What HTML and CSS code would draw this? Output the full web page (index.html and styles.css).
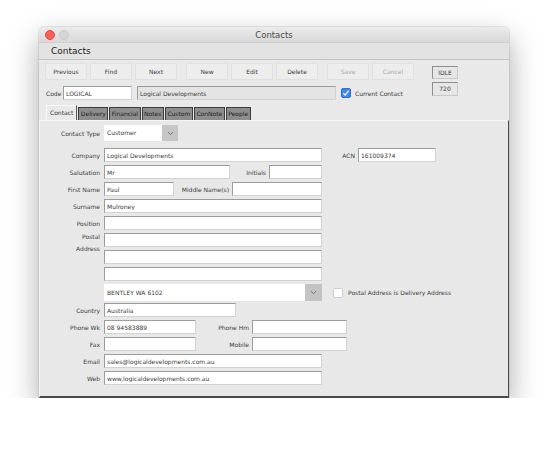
FILE: index.html
```html
<!DOCTYPE html>
<html lang="en">
<head>
    <meta charset="UTF-8">
    <title>Contacts</title>
    <link rel="stylesheet" href="styles.css">
</head>
<body>
    <div class="window">
        <div class="titlebar">
            <span class="dot close"></span>
            <span class="dot"></span>
            <div class="title">Contacts</div>
        </div>
        <div class="header">Contacts</div>

        <div class="toolbar">
            <div class="toolbar-main">
                <div class="buttons">
                    <div class="group">
                        <button>Previous</button>
                        <button>Find</button>
                        <button>Next</button>
                    </div>
                    <div class="group">
                        <button>New</button>
                        <button>Edit</button>
                        <button>Delete</button>
                    </div>
                    <div class="group">
                        <button class="disabled">Save</button>
                        <button class="disabled">Cancel</button>
                    </div>
                </div>
                <div class="code-row">
                    <label class="code-label">Code</label>
                    <input type="text" class="code-input" value="LOGICAL">
                    <input type="text" class="name-input" value="Logical Developments" readonly>
                    <span class="check checked">
                        <svg width="8" height="8" viewBox="0 0 8 8"><path d="M1.3 4.2 L3.2 6.1 L6.8 1.6" fill="none" stroke="#fff" stroke-width="1.3"/></svg>
                    </span>
                    <span class="check-label">Current Contact</span>
                </div>
            </div>
            <div class="status">
                <div class="status-box">IDLE</div>
                <div class="status-box tall">720</div>
            </div>
        </div>

        <div class="tabs">
            <div class="tab active">Contact</div>
            <div class="tab">Delivery</div>
            <div class="tab">Financial</div>
            <div class="tab">Notes</div>
            <div class="tab">Custom</div>
            <div class="tab">ConNote</div>
            <div class="tab">People</div>
        </div>

        <div class="panel">
            <div class="row type-row">
                <label>Contact Type</label>
                <div class="select w-type">
                    <span class="select-value">Customer</span>
                    <span class="select-arrow">
                        <svg width="7" height="5" viewBox="0 0 7 5"><path d="M1 1.2 L3.5 3.6 L6 1.2" fill="none" stroke="#666" stroke-width="0.9"/></svg>
                    </span>
                </div>
            </div>

            <div class="row company-row">
                <label>Company</label>
                <input type="text" class="w-full" value="Logical Developments">
                <label class="side w-acn">ACN</label>
                <input type="text" class="w-acn-input" value="161009374">
            </div>
            <div class="row">
                <label>Salutation</label>
                <input type="text" class="w-salutation" value="Mr">
                <label class="side w-initials">Initials</label>
                <input type="text" class="w-initials-input">
            </div>
            <div class="row">
                <label>First Name</label>
                <input type="text" class="w-first" value="Paul">
                <label class="side w-middle">Middle Name(s)</label>
                <input type="text" class="w-middle-input">
            </div>
            <div class="row">
                <label>Surname</label>
                <input type="text" class="w-full" value="Mulroney">
            </div>
            <div class="row">
                <label>Position</label>
                <input type="text" class="w-full">
            </div>
            <div class="row">
                <label class="postal">Postal<br>Address</label>
                <input type="text" class="w-full">
            </div>
            <div class="row">
                <label></label>
                <input type="text" class="w-full">
            </div>
            <div class="row">
                <label></label>
                <input type="text" class="w-full">
            </div>
            <div class="row combo-row">
                <label></label>
                <div class="select combo w-full">
                    <span class="select-value">BENTLEY WA 6102</span>
                    <span class="select-arrow">
                        <svg width="7" height="5" viewBox="0 0 7 5"><path d="M1 1.2 L3.5 3.6 L6 1.2" fill="none" stroke="#666" stroke-width="0.9"/></svg>
                    </span>
                </div>
                <span class="check plain"></span>
                <span class="check-label">Postal Address is Delivery Address</span>
            </div>
            <div class="row country-row">
                <label>Country</label>
                <input type="text" class="w-country" value="Australia">
            </div>
            <div class="row">
                <label>Phone Wk</label>
                <input type="text" class="w-phone" value="08 94583889">
                <label class="side w-phone-label">Phone Hm</label>
                <input type="text" class="w-phone-hm">
            </div>
            <div class="row">
                <label>Fax</label>
                <input type="text" class="w-phone">
                <label class="side w-phone-label">Mobile</label>
                <input type="text" class="w-phone-hm">
            </div>
            <div class="row">
                <label>Email</label>
                <input type="text" class="w-full" value="sales@logicaldevelopments.com.au">
            </div>
            <div class="row">
                <label>Web</label>
                <input type="text" class="w-full" value="www.logicaldevelopments.com.au">
            </div>
        </div>
    </div>
</body>
</html>
```

FILE: styles.css
```css
* {
    box-sizing: border-box;
    margin: 0;
    padding: 0;
}

body {
    background: #ffffff;
    font-family: 'DejaVu Sans', 'Liberation Sans', sans-serif;
    font-size: 6px;
    color: #3a3a3a;
}

.window {
    width: 470px;
    height: 371px;
    margin: 27px 0 0 39px;
    background: #e9e9e9;
    border-radius: 5px 5px 0 0;
    box-shadow: 0 12px 30px rgba(0, 0, 0, 0.34), 0 0 0 1px rgba(0, 0, 0, 0.08);
    display: flex;
    flex-direction: column;
}

.titlebar {
    height: 16px;
    display: flex;
    align-items: center;
    padding-left: 6px;
    gap: 4px;
    background: linear-gradient(#ebebeb, #d9d9d9);
    border-radius: 5px 5px 0 0;
    border-bottom: 1px solid #cfcfcf;
    position: relative;
}

.dot {
    width: 10px;
    height: 10px;
    border-radius: 50%;
    background: #d6d6d6;
    border: 1px solid #c8c8c8;
}

.dot.close {
    background: #fb5f57;
    border-color: #e2463f;
}

.title {
    position: absolute;
    left: 0;
    right: 0;
    text-align: center;
    font-size: 8.5px;
    color: #4a4a4a;
    pointer-events: none;
}

.header {
    height: 17px;
    line-height: 16px;
    padding-left: 12px;
    font-size: 9px;
    color: #222;
    background: #e3e3e3;
    border-bottom: 1px solid #c4c4c4;
}

.toolbar {
    display: flex;
    padding: 3px 0 0 6px;
    height: 45px;
}

.toolbar-main {
    width: 387px;
}

.buttons {
    display: flex;
    gap: 9px;
}

.group {
    display: flex;
    gap: 3px;
}

button {
    width: 42px;
    height: 17px;
    font-family: inherit;
    font-size: 6px;
    color: #3a3a3a;
    background: #ededed;
    border: 1px solid #e0e0e0;
    border-radius: 1px;
}

button.disabled {
    color: #a8a8a8;
}

.code-row {
    display: flex;
    align-items: center;
    margin-top: 6px;
    height: 14px;
}

.code-label {
    width: 18px;
    padding-left: 1px;
}

input {
    height: 14px;
    padding: 0 2px;
    font-family: inherit;
    font-size: 6px;
    color: #3a3a3a;
    background: #ffffff;
    border: 1px solid;
    border-color: #9c9c9c #d2d2d2 #d2d2d2 #9c9c9c;
    outline: none;
}

.code-input {
    width: 69px;
}

.name-input {
    width: 199px;
    margin-left: 5px;
    background: #e4e4e4;
}

.check {
    width: 10px;
    height: 10px;
    border-radius: 2px;
    display: flex;
    align-items: center;
    justify-content: center;
    flex-shrink: 0;
}

.check.checked {
    margin: 0 4px 0 5px;
    background: #3b86f7;
    border: 1px solid #2f6fd0;
}

.check.plain {
    margin: 0 5px 0 11px;
    background: #ffffff;
    border: 1px solid #cfcfcf;
}

.check-label {
    white-space: nowrap;
}

.status {
    display: flex;
    flex-direction: column;
    gap: 3px;
    padding-top: 3px;
}

.status-box {
    width: 26px;
    height: 13px;
    line-height: 11px;
    text-align: center;
    border: 1px solid;
    border-color: #8e8e8e #c9c9c9 #c9c9c9 #8e8e8e;
    background: #e6e6e6;
}

.status-box.tall {
    height: 14px;
}

.tabs {
    display: flex;
    padding-left: 7px;
    height: 15px;
    align-items: flex-end;
}

.tab {
    height: 13px;
    line-height: 12px;
    padding: 0 1.5px;
    background: #8d8d8d;
    color: #1e1e1e;
    border: 1px solid #3c3c3c;
    border-bottom: none;
    margin-right: 1px;
}

.tab.active {
    height: 15px;
    line-height: 13px;
    padding: 0 3px;
    background: #e9e9e9;
    border-color: #f8f8f8 #555 transparent #f8f8f8;
    color: #333;
}

.panel {
    flex: 1;
    padding: 4px 0 0 4px;
    border-top: 1px solid #f5f5f5;
    border-left: 1px solid #f5f5f5;
    border-right: 1px solid #4a4a4a;
    border-bottom: 2px solid #4a4a4a;
    background: #e8e8e8;
}

.row {
    display: flex;
    align-items: center;
    height: 14px;
    margin-top: 3px;
}

.row label {
    width: 60px;
    padding-right: 4px;
    text-align: right;
    flex-shrink: 0;
    white-space: nowrap;
}

.row label.postal {
    align-self: flex-start;
    line-height: 12px;
    margin-top: -2px;
    height: 14px;
}

.type-row {
    height: 16px;
    margin-top: 0;
}

.company-row {
    margin-top: 7px;
}

.combo-row {
    height: 17px;
}

.country-row {
    margin-top: 2px;
}

.select {
    display: flex;
    height: 16px;
    background: #ffffff;
}

.select-value {
    flex: 1;
    padding-left: 3px;
    line-height: 16px;
}

.select-arrow {
    width: 16px;
    background: #c6c6c6;
    display: flex;
    align-items: center;
    justify-content: center;
}

.combo {
    height: 17px;
}

.combo .select-value {
    line-height: 17px;
}

.combo .select-arrow {
    width: 17px;
    background: #c3c3c3;
}

.row .w-type { width: 74px; }
.row .w-full { width: 218px; }
.row .w-acn-input { width: 78px; }
.row .w-salutation { width: 126px; }
.row .w-initials-input { width: 53px; }
.row .w-first { width: 70px; }
.row .w-middle-input { width: 90px; }
.row .w-country { width: 132px; }
.row .w-phone { width: 92px; }
.row .w-phone-hm { width: 95px; }

.row label.side { padding-right: 3px; }
.row label.w-acn { width: 36px; }
.row label.w-initials { width: 39px; }
.row label.w-middle { width: 58px; }
.row label.w-phone-label { width: 56px; }
```
